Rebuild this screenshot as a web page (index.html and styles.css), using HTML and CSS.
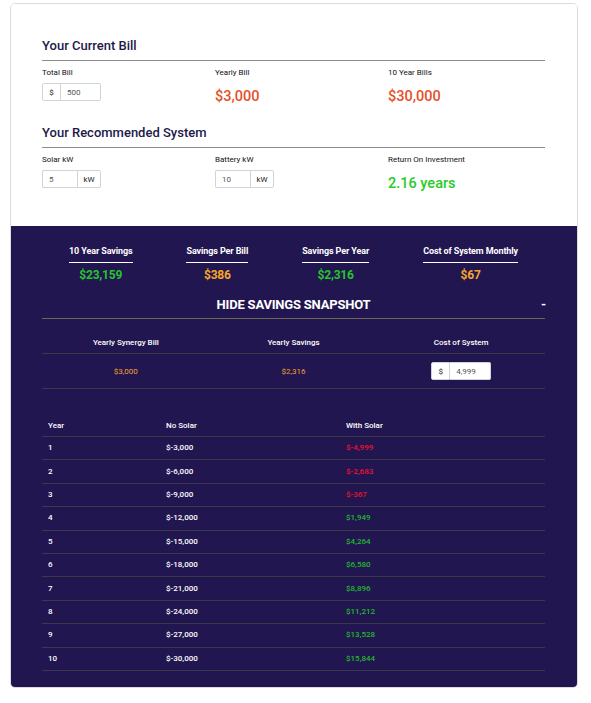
FILE: index.html
```html
<!DOCTYPE html>
<html>
<head>
<meta charset="utf-8">
<link rel="stylesheet" href="styles.css">
</head>
<body>
<div class="card">
  <div class="top">
    <h2 class="heading">Your Current Bill</h2>
    <div class="grid3">
      <div class="field">
        <div class="label">Total Bill</div>
        <div class="igroup">
          <span class="addon addon-pre">$</span><span class="ibox w40">500</span>
        </div>
      </div>
      <div class="field">
        <div class="label">Yearly Bill</div>
        <div class="value red">$3,000</div>
      </div>
      <div class="field">
        <div class="label">10 Year Bills</div>
        <div class="value red">$30,000</div>
      </div>
    </div>
    <h2 class="heading heading2">Your Recommended System</h2>
    <div class="grid3">
      <div class="field">
        <div class="label">Solar kW</div>
        <div class="igroup">
          <span class="ibox w35">5</span><span class="addon addon-post">kW</span>
        </div>
      </div>
      <div class="field">
        <div class="label">Battery kW</div>
        <div class="igroup">
          <span class="ibox w35">10</span><span class="addon addon-post">kW</span>
        </div>
      </div>
      <div class="field">
        <div class="label">Return On Investment</div>
        <div class="value green">2.16 years</div>
      </div>
    </div>
  </div>
  <div class="dark">
    <div class="stats">
      <div class="stat"><div class="stat-label">10 Year Savings</div><div class="stat-val sgreen">$23,159</div></div>
      <div class="stat"><div class="stat-label">Savings Per Bill</div><div class="stat-val sorange">$386</div></div>
      <div class="stat"><div class="stat-label">Savings Per Year</div><div class="stat-val sgreen">$2,316</div></div>
      <div class="stat"><div class="stat-label">Cost of System Monthly</div><div class="stat-val sorange">$67</div></div>
    </div>
    <div class="toggle">
      <span class="toggle-title">HIDE SAVINGS SNAPSHOT</span>
      <span class="toggle-sign">-</span>
    </div>
    <div class="snap">
      <div class="snap-head">Yearly Synergy Bill</div>
      <div class="snap-head">Yearly Savings</div>
      <div class="snap-head">Cost of System</div>
      <div class="snap-cell orange">$3,000</div>
      <div class="snap-cell orange">$2,316</div>
      <div class="snap-cell snap-input">
        <div class="igroup">
          <span class="addon addon-pre">$</span><span class="ibox w41">4,999</span>
        </div>
      </div>
    </div>
    <table class="years">
      <thead>
        <tr><th class="c1">Year</th><th class="c2">No Solar</th><th>With Solar</th></tr>
      </thead>
      <tbody>
        <tr><td>1</td><td>$-3,000</td><td class="neg">$-4,999</td></tr>
        <tr><td>2</td><td>$-6,000</td><td class="neg">$-2,683</td></tr>
        <tr><td>3</td><td>$-9,000</td><td class="neg">$-367</td></tr>
        <tr><td>4</td><td>$-12,000</td><td class="pos">$1,949</td></tr>
        <tr><td>5</td><td>$-15,000</td><td class="pos">$4,264</td></tr>
        <tr><td>6</td><td>$-18,000</td><td class="pos">$6,580</td></tr>
        <tr><td>7</td><td>$-21,000</td><td class="pos">$8,896</td></tr>
        <tr><td>8</td><td>$-24,000</td><td class="pos">$11,212</td></tr>
        <tr><td>9</td><td>$-27,000</td><td class="pos">$13,528</td></tr>
        <tr><td>10</td><td>$-30,000</td><td class="pos">$15,844</td></tr>
      </tbody>
    </table>
  </div>
</div>
</body>
</html>
```
FILE: styles.css
```css
* { box-sizing: border-box; }
body {
  margin: 0;
  padding: 3px 13px 0 10px;
  background: #fff;
  font-family: Roboto, "Liberation Sans", sans-serif;
}
.card {
  width: 568px;
  border: 1px solid #dcdcdc;
  border-radius: 5px;
  overflow: hidden;
}
.top {
  padding: 33px 32px 32px 31px;
  background: #fff;
}
.heading {
  margin: 0;
  font-size: 13px;
  line-height: 18px;
  font-weight: 500;
  color: #1d1a48;
  padding-bottom: 5px;
  border-bottom: 1px solid #8c8c8c;
}
.heading2 { margin-top: 17px; }
.grid3 {
  display: grid;
  grid-template-columns: 1fr 1fr 1fr;
  column-gap: 16px;
}
.label {
  margin-top: 7px;
  font-size: 8px;
  line-height: 10px;
  color: #111;
}
.igroup {
  display: flex;
  margin-top: 5px;
  height: 18px;
}
.addon, .ibox {
  display: flex;
  align-items: center;
  height: 18px;
  border: 1px solid #cfd3da;
  font-size: 8px;
  background: #fff;
}
.addon {
  justify-content: center;
  color: #222;
}
.addon-pre { width: 19px; border-radius: 2px 0 0 2px; }
.addon-post { width: 24px; border-radius: 0 2px 2px 0; border-left: 1px solid #cfd3da; }
.ibox {
  padding-left: 6px;
  color: #555;
}
.addon-pre + .ibox { border-left: none; border-radius: 0 2px 2px 0; }
.ibox.w35 { width: 35px; border-radius: 2px 0 0 2px; border-right: none; }
.w40 { width: 40px; }
.w41 { width: 41px; }
.value {
  margin-top: 9px;
  font-size: 14.5px;
  line-height: 20px;
  font-weight: 500;
}
.red { color: #e5502a; }
.green { color: #27cc27; }

.dark {
  background: #21164f;
  padding: 19px 32px 16px 31px;
  color: #fff;
}
.stats {
  display: flex;
  justify-content: space-around;
}
.stat {
  display: flex;
  flex-direction: column;
  align-items: center;
}
.stat-label {
  font-size: 9px;
  line-height: 12px;
  font-weight: 700;
  letter-spacing: -0.1px;
  padding-bottom: 5px;
  border-bottom: 1px solid #fff;
}
.stat-val {
  margin-top: 4px;
  font-size: 12px;
  line-height: 16px;
  font-weight: 700;
  letter-spacing: -0.2px;
}
.sgreen { color: #25c42a; }
.sorange { color: #f5a52a; }
.toggle {
  position: relative;
  margin-top: 14px;
  padding-bottom: 5px;
  border-bottom: 1px solid #6c6857;
  text-align: center;
  font-size: 13px;
  line-height: 16px;
}
.toggle-title {
  font-weight: 700;
  letter-spacing: -0.2px;
}
.toggle-sign {
  position: absolute;
  right: -1px;
  top: 0;
  font-weight: 700;
}
.snap {
  display: grid;
  grid-template-columns: 1fr 1fr 1fr;
  margin-top: 19px;
}
.snap-head {
  text-align: center;
  font-size: 8px;
  line-height: 10px;
  font-weight: 500;
  padding-bottom: 5px;
  border-bottom: 1px solid #3c3a48;
}
.snap-cell {
  display: flex;
  justify-content: center;
  align-items: center;
  height: 35px;
  font-size: 8px;
  border-bottom: 1px solid #3c3a48;
}
.snap-input .igroup { margin-top: 0; }
.orange { color: #f1a130; }
.years {
  width: 100%;
  margin-top: 32px;
  border-collapse: collapse;
  font-size: 8px;
}
.years th {
  text-align: left;
  font-weight: 500;
  line-height: 10px;
  padding: 0 6px 5px;
  border-bottom: 1px solid #3c3a48;
}
.years th.c1 { width: 118px; }
.years th.c2 { width: 180px; }
.years td {
  height: 23.4px;
  padding: 0 6px;
  line-height: 10px;
  font-weight: 500;
  border-bottom: 1px solid #3c3a48;
}
.years td.neg { color: #ec1230; }
.years td.pos { color: #22b82a; }
```
